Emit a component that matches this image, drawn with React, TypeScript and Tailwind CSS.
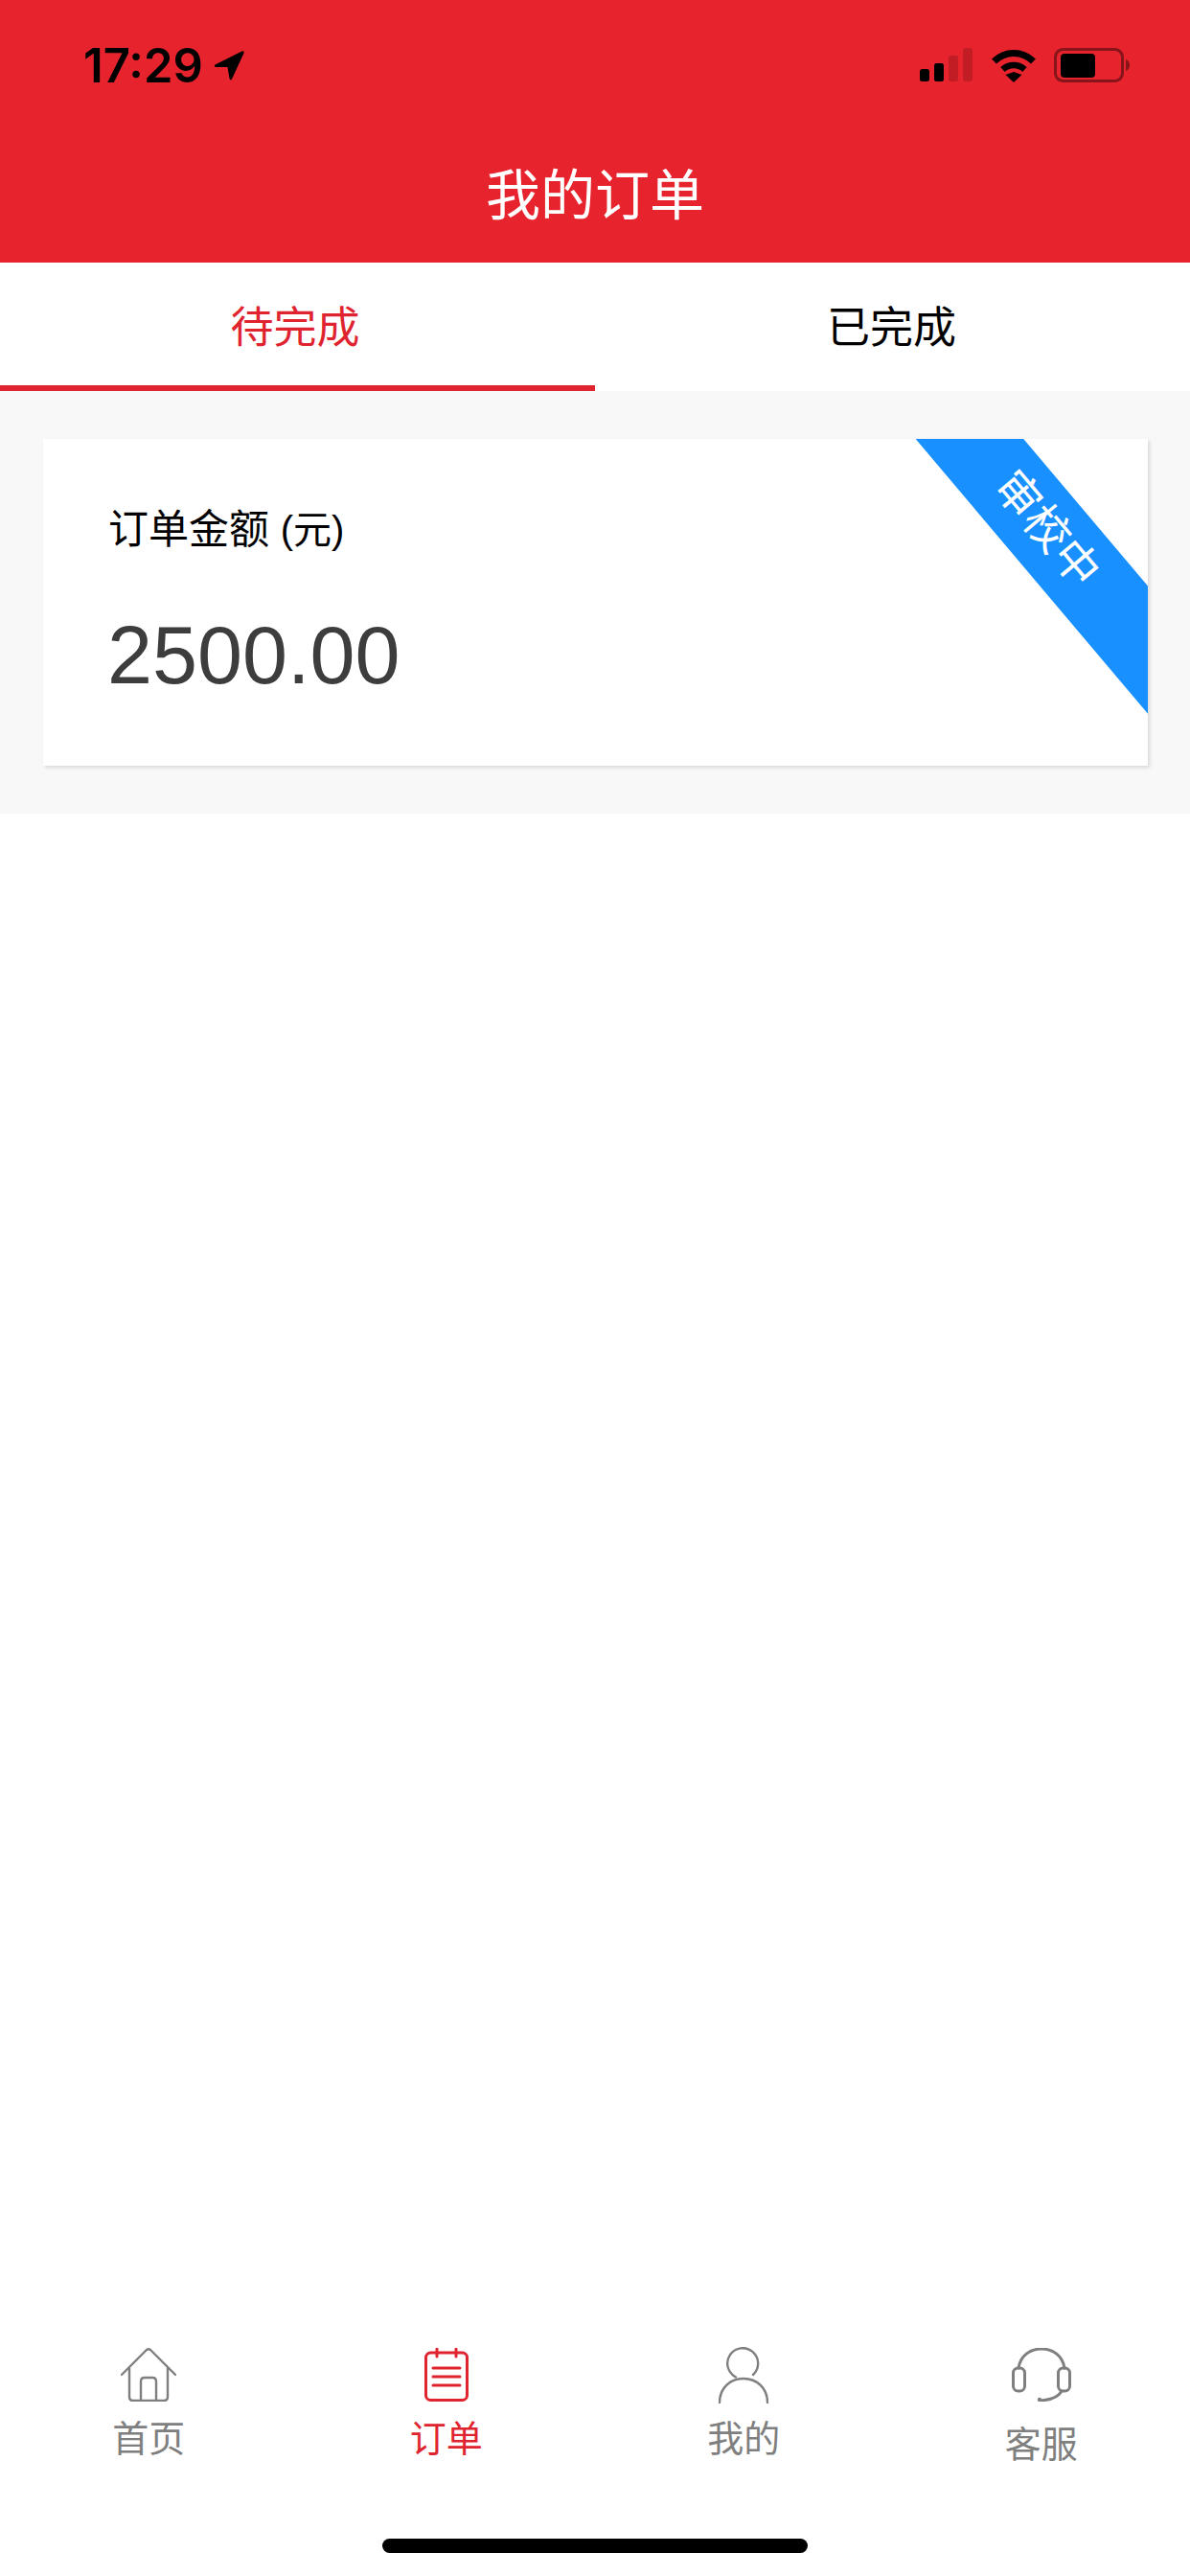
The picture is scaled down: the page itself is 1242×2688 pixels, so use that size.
const FONT = "font-['Liberation_Sans','Noto_Sans_CJK_SC',sans-serif]";

function Signal() {
  return (
    <svg width="56" height="36" viewBox="0 0 56 36" className="block">
      <rect x="0" y="22" width="10" height="13" rx="2.5" fill="#000" />
      <rect x="15" y="16" width="10" height="19" rx="2.5" fill="#000" />
      <rect x="30" y="8" width="10" height="27" rx="2.5" fill="#000" fillOpacity="0.16" />
      <rect x="45" y="0" width="10" height="35" rx="2.5" fill="#000" fillOpacity="0.16" />
    </svg>
  );
}

function Wifi() {
  return (
    <svg width="48" height="36" viewBox="0 0 48 36" className="block">
      <path d="M24 25 L32.5 28 L24 36 L15.5 28 Z" fill="#000" />
      <path d="M3.5 14 C15 2.5 33 2.5 44.5 14" fill="none" stroke="#000" strokeWidth="7" strokeLinecap="butt" />
      <path d="M12.5 22.5 C19 16.5 29 16.5 35.5 22.5" fill="none" stroke="#000" strokeWidth="6.5" strokeLinecap="butt" />
    </svg>
  );
}

function Battery() {
  return (
    <svg width="80" height="36" viewBox="0 0 80 36" className="block">
      <rect x="1.5" y="1.5" width="70" height="33" rx="8" fill="none" stroke="#000" strokeOpacity="0.42" strokeWidth="3" />
      <rect x="7" y="6" width="36" height="25" rx="4" fill="#000" />
      <path d="M75 12 C78 13 79 15.5 79 18 C79 20.5 78 23 75 24 Z" fill="#000" fillOpacity="0.42" />
    </svg>
  );
}

function HomeIcon() {
  return (
    <svg width="58" height="56" viewBox="0 0 58 56" fill="none" stroke="#7f7f7f" strokeWidth="2.4" strokeLinejoin="round" strokeLinecap="round" className="block">
      <path d="M1 28 L27 2 Q29 0.5 31 2 L57 28" />
      <path d="M9 21 V51 Q9 55 13 55 H45 Q49 55 49 51 V21" />
      <path d="M21 55 V35 Q21 31 25 31 H33 Q37 31 37 35 V55" />
    </svg>
  );
}

function OrderIcon() {
  return (
    <svg width="46" height="56" viewBox="0 0 46 56" fill="none" stroke="#e0242f" strokeLinecap="round" className="block">
      <rect x="1.5" y="5" width="43" height="49.5" rx="5" strokeWidth="3" />
      <path d="M13 1 V9 M33 1 V9" strokeWidth="3" />
      <path d="M9 21 H37 M9 30 H37 M9 39 H37" strokeWidth="3" />
    </svg>
  );
}

function PersonIcon() {
  return (
    <svg width="52" height="59" viewBox="0 -1 52 59" fill="none" stroke="#7f7f7f" strokeWidth="2.4" strokeLinecap="round" className="block">
      <path d="M18 30.5 A16 16 0 1 1 36 28" />
      <path d="M1 57 C1 42 12 32 26 32 C40 32 51 42 51 57" />
    </svg>
  );
}

function HeadsetIcon() {
  return (
    <svg width="62" height="56" viewBox="0 0 62 56" fill="none" stroke="#7f7f7f" strokeWidth="3" strokeLinecap="round" className="block">
      <path d="M7 21 C9 8 19 1 31 1 C43 1 53 8 55 21" />
      <rect x="1.5" y="21" width="12" height="24" rx="5" />
      <rect x="48.5" y="21" width="12" height="24" rx="5" />
      <path d="M52 45 C49 51 43 54 30 55" />
      <circle cx="29" cy="54" r="2.2" fill="#7f7f7f" stroke="none" />
    </svg>
  );
}

function NavItem({ icon, label, active, low }: { icon: React.ReactNode; label: string; active?: boolean; low?: boolean }) {
  return (
    <div className="flex flex-col items-center">
      <div className="flex h-[60px] items-center justify-center">{icon}</div>
      <div className={`text-[38px] leading-[50px] ${low ? "mt-[18px]" : "mt-[12px]"} ${active ? "text-[#e0242f]" : "text-[#7f7f7f]"}`}>
        {label}
      </div>
    </div>
  );
}

export default function App() {
  return (
    <div className={`flex h-[2688px] w-[1242px] flex-col overflow-hidden bg-white ${FONT}`}>
      <header className="flex h-[274px] flex-col bg-[#e7232d]">
        <div className="flex h-[136px] items-center justify-between pl-[87px] pr-[62px]">
          <div className="flex items-center gap-[11px]">
            <span className="font-['Inter',sans-serif] text-[49px] font-semibold leading-none text-black">17:29</span>
            <svg width="33" height="33" viewBox="0 0 33 33" className="block">
              <path d="M1.5 15.5 L29.5 1.5 Q32 0.5 31.5 3.5 L19 30.5 Q17.5 32.5 16.5 30 L14.5 18 L2 18 Q0 17 1.5 15.5 Z" fill="#000" />
            </svg>
          </div>
          <div className="flex items-center gap-[18px]">
            <Signal />
            <Wifi />
            <Battery />
          </div>
        </div>
        <div className="flex h-[136px] items-center justify-center text-[57px] leading-none text-white">我的订单</div>
      </header>

      <nav className="grid h-[134px] grid-cols-2 bg-white">
        <div className="flex items-center justify-center border-b-[6px] border-[#e0242f] pr-[5px] pt-[8px] text-[45px] leading-none text-[#e0242f]">待完成</div>
        <div className="flex items-center justify-center pr-[2px] pt-[2px] text-[45px] leading-none text-black">已完成</div>
      </nav>

      <section className="bg-[#f8f8f8] pb-[50px] pl-[45px] pr-[44px] pt-[50px]">
        <div className="relative h-[341px] overflow-hidden bg-white pl-[68px] pt-[70px] shadow-[2px_2px_4px_rgba(0,0,0,0.13)]">
          <div className="text-[42px] leading-[50px] text-black">
            订单金额 <span className="text-[40px]">(元)</span>
          </div>
          <div className="ml-[-1px] mt-[56px] text-[84.5px] leading-[100px] text-[#3d3d3d]">2500.00</div>
          <div className="absolute left-[743px] top-[47px] flex h-[86px] w-[600px] rotate-[49.8deg] items-center justify-center bg-[#1890ff] text-[47px] leading-none text-white">
            <span className="translate-x-[6px] translate-y-[-2px]">审校中</span>
          </div>
        </div>
      </section>

      <div className="flex-1" />

      <footer className="flex h-[248px] flex-col pt-[8px]">
        <div className="grid grid-cols-4">
          <NavItem icon={<HomeIcon />} label="首页" />
          <NavItem icon={<OrderIcon />} label="订单" active />
          <NavItem icon={<PersonIcon />} label="我的" />
          <NavItem icon={<HeadsetIcon />} label="客服" low />
        </div>
        <div className="mb-[24px] mt-auto h-[15px] w-[444px] self-center rounded-full bg-black" />
      </footer>
    </div>
  );
}
